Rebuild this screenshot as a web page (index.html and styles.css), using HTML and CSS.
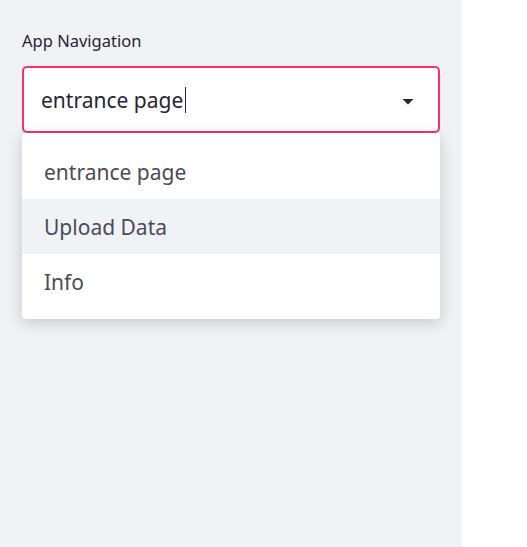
FILE: index.html
```html
<!DOCTYPE html>
<html>
<head>
<meta charset="utf-8">
<link rel="stylesheet" href="styles.css">
</head>
<body>
<div class="app">
  <aside class="sidebar">
    <label class="label">App Navigation</label>
    <div class="select-wrap">
      <div class="select">
        <span class="value">entrance page</span><span class="cursor"></span>
        <svg class="arrow" width="12" height="8" viewBox="0 0 12 8"><path d="M0.5 1 L11.5 1 L6 6.5 Z" fill="#262730"/></svg>
      </div>
      <ul class="menu">
        <li class="item">entrance page</li>
        <li class="item active">Upload Data</li>
        <li class="item">Info</li>
      </ul>
    </div>
  </aside>
  <main class="main"></main>
</div>
</body>
</html>
```
FILE: styles.css
```css
* { box-sizing: border-box; }
html, body { margin: 0; padding: 0; height: 100%; }
body { font-family: "Noto Sans", "Open Sans", sans-serif; background: #fff; }
.app { display: flex; height: 547px; }
.sidebar { width: 462px; background: #f0f2f6; padding: 30px 22px 0 22px; }
.main { flex: 1; background: #fff; }
.label { display: block; font-size: 16.5px; color: #262730; line-height: 21px; margin-bottom: 15px; }
.select-wrap { position: relative; }
.select {
  height: 67px; background: #fff; border: 2px solid #f63366; border-radius: 5px;
  display: flex; align-items: center; padding: 0 0 0 17px; position: relative;
}
.value { font-size: 21px; color: #262730; }
.cursor { display: inline-block; width: 1px; height: 26px; background: #262730; margin-left: 2px; }
.arrow { position: absolute; right: 24px; top: 30px; }
.menu {
  position: absolute; left: 0; right: 0; top: 67px; margin: 0; padding: 11px 0 10px;
  list-style: none; background: #fff; border-radius: 4px;
  box-shadow: 0 4px 16px rgba(0,0,0,0.18);
}
.item { height: 55px; display: flex; align-items: center; padding-left: 22px; font-size: 21px; color: #4b4c57; }
.item.active { background: #f0f2f6; }
```
